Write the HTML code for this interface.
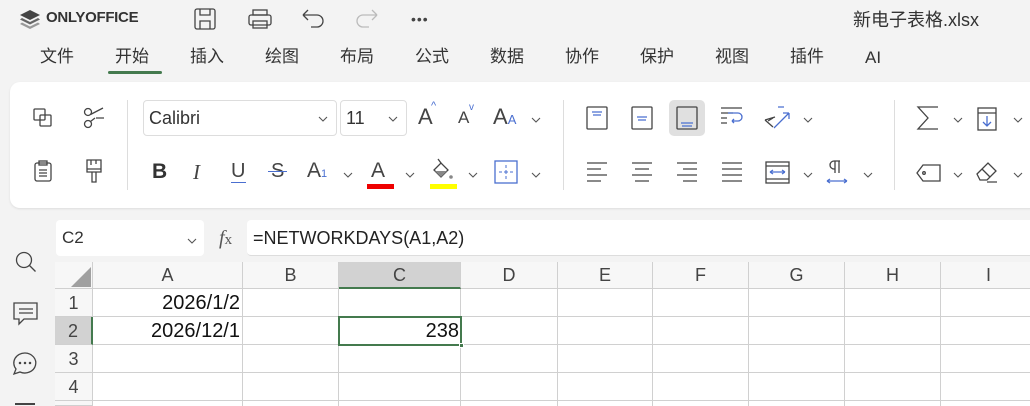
<!DOCTYPE html>
<html><head><meta charset="utf-8"><style>
*{margin:0;padding:0;box-sizing:border-box}
html,body{width:1030px;height:406px;overflow:hidden}
body{background:#f3f3f3;font-family:"Liberation Sans","Noto Sans CJK SC",sans-serif;position:relative;color:#333}
.a{position:absolute}
.tab{position:absolute;top:45px;font-size:17px;line-height:24px;color:#333}
svg{position:absolute;overflow:visible}
.ic{fill:none;stroke:#444;stroke-width:1.3}
.bl{stroke:#4a6fd0}
.cv{fill:none;stroke:#555;stroke-width:1.1}
.hd{position:absolute;top:262px;height:27px;background:#f7f7f7;border-right:1px solid #d0d0d0;border-bottom:1px solid #d0d0d0;text-align:center;font-size:18px;line-height:27px;color:#444}
.rh{position:absolute;left:55px;width:38px;height:28px;background:#f7f7f7;border-bottom:1px solid #d0d0d0;border-right:1px solid #d0d0d0;font-size:18px;line-height:28px;text-align:center;color:#444}
.vl{position:absolute;top:289px;width:1px;height:117px;background:#d0d0d0}
.hl{position:absolute;left:93px;width:937px;height:1px;background:#d0d0d0}
.cell{position:absolute;font-size:20px;line-height:24px;text-align:right;color:#111}
</style></head><body>
<svg style="left:19px;top:9px" width="22" height="20"><path d="M11 1 L21 6 L11 11 L1 6Z" fill="#444"/><path d="M3 9 L11 13 L19 9 L21 10.5 L11 15.5 L1 10.5Z" fill="#666"/><path d="M3 13.5 L11 17.5 L19 13.5 L21 15 L11 20 L1 15Z" fill="#999"/></svg>
<div class="a" style="left:46px;top:9px;font-size:15px;font-weight:bold;color:#333;letter-spacing:-0.3px">ONLYOFFICE</div>
<svg style="left:194px;top:8px" width="22" height="22" class="ic"><rect x="1" y="1" width="20" height="20" rx="2"/><path d="M6 1v6h10V1M6 21v-8h10v8"/></svg>
<svg style="left:248px;top:9px" width="24" height="20" class="ic"><rect x="5" y="1" width="14" height="5"/><rect x="1" y="6" width="22" height="10" rx="2"/><rect x="5" y="12" width="14" height="7"/></svg>
<svg style="left:302px;top:9px" width="22" height="20" class="ic"><path d="M1 6h14a6 6 0 0 1 0 12H9M1 6l5-5M1 6l5 5"/></svg>
<svg style="left:356px;top:9px" width="22" height="20" class="ic"><path d="M21 6H7a6 6 0 0 0 0 12h6M21 6l-5-5M21 6l-5 5" stroke="#bbb"/></svg>
<div class="a" style="left:411px;top:11px;font-size:14px;line-height:16px;color:#444;letter-spacing:1px">•••</div>
<div class="a" style="left:853px;top:9px;font-size:18px;line-height:22px;color:#333">新电子表格.xlsx</div>
<div class="tab" style="left:40px">文件</div>
<div class="tab" style="left:115px">开始</div>
<div class="a" style="left:108px;top:71px;width:54px;height:3px;background:#447a4e;border-radius:2px"></div>
<div class="tab" style="left:190px">插入</div>
<div class="tab" style="left:265px">绘图</div>
<div class="tab" style="left:340px">布局</div>
<div class="tab" style="left:415px">公式</div>
<div class="tab" style="left:490px">数据</div>
<div class="tab" style="left:565px">协作</div>
<div class="tab" style="left:640px">保护</div>
<div class="tab" style="left:715px">视图</div>
<div class="tab" style="left:790px">插件</div>
<div class="tab" style="left:865px;top:46px">AI</div>
<div class="a" style="left:10px;top:82px;width:1040px;height:126px;background:#fff;border-radius:10px;box-shadow:0 1px 2px #ddd"></div>
<div class="a" style="left:127px;top:100px;width:1px;height:90px;background:#ddd"></div>
<div class="a" style="left:563px;top:100px;width:1px;height:90px;background:#ddd"></div>
<div class="a" style="left:894px;top:100px;width:1px;height:90px;background:#ddd"></div>
<svg style="left:33px;top:108px" width="20" height="20" class="ic"><rect x="1" y="1" width="11" height="11" rx="1"/><rect x="7" y="7" width="11" height="11" rx="1"/></svg>
<svg style="left:83px;top:107px" width="22" height="22" class="ic"><circle cx="5" cy="5" r="3.5"/><circle cx="5" cy="17" r="3.5"/><path d="M7.5 7.5L20 1M7.5 14.5L12 11M13 11h8"/></svg>
<svg style="left:34px;top:160px" width="18" height="22" class="ic"><rect x="1" y="3" width="16" height="18" rx="2"/><rect x="5" y="1" width="8" height="4"/><path d="M5 10h8M5 13h8M5 16h8"/></svg>
<svg style="left:86px;top:159px" width="16" height="24" class="ic"><path d="M1 1h14v12H1zM1 10h14M5 1v5M10 1v4M6 13v10h4V13"/></svg>
<div class="a" style="left:143px;top:100px;width:194px;height:36px;border:1px solid #ddd;border-radius:4px;font-size:18px;line-height:34px;padding-left:5px">Calibri</div>
<svg style="left:318px;top:116px" width="10" height="6" class="cv"><path d="M1 1l4 4 4-4"/></svg>
<div class="a" style="left:340px;top:100px;width:67px;height:36px;border:1px solid #ddd;border-radius:4px;font-size:18px;line-height:34px;padding-left:5px">11</div>
<svg style="left:388px;top:116px" width="10" height="6" class="cv"><path d="M1 1l4 4 4-4"/></svg>
<div class="a" style="left:418px;top:104px;font-size:22px;line-height:26px;color:#444">A</div><div class="a" style="left:431px;top:100px;font-size:11px;color:#4a6fd0">^</div>
<div class="a" style="left:458px;top:108px;font-size:17px;line-height:20px;color:#444">A</div><div class="a" style="left:469px;top:102px;font-size:10px;color:#4a6fd0">v</div>
<div class="a" style="left:493px;top:104px;font-size:22px;line-height:26px;color:#444">A<span style="font-size:13px;color:#4a6fd0">A</span></div>
<svg style="left:531px;top:117px" width="10" height="6" class="cv"><path d="M1 1l4 4 4-4"/></svg>
<div class="a" style="left:152px;top:160px;font-size:21px;line-height:24px;font-weight:bold;color:#333">B</div>
<div class="a" style="left:193px;top:160px;font-size:21px;line-height:24px;font-style:italic;color:#444;font-family:'Liberation Serif',serif">I</div>
<div class="a" style="left:231px;top:159px;font-size:20px;line-height:24px;color:#444">U</div><div class="a" style="left:231px;top:182px;width:15px;height:1px;background:#4a6fd0"></div>
<div class="a" style="left:271px;top:159px;font-size:20px;line-height:24px;color:#444">S</div><div class="a" style="left:268px;top:171px;width:19px;height:1px;background:#4a6fd0"></div>
<div class="a" style="left:307px;top:159px;font-size:21px;line-height:24px;color:#444">A<span style="font-size:11px;color:#4a6fd0">1</span></div>
<svg style="left:343px;top:172px" width="10" height="6" class="cv"><path d="M1 1l4 4 4-4"/></svg>
<div class="a" style="left:371px;top:159px;font-size:21px;line-height:24px;color:#444">A</div><div class="a" style="left:367px;top:184px;width:27px;height:5px;background:#e00"></div>
<svg style="left:405px;top:172px" width="10" height="6" class="cv"><path d="M1 1l4 4 4-4"/></svg>
<svg style="left:430px;top:158px" width="26" height="24" class="ic"><path d="M4 12l7-7 7 7-7 7z"/><path d="M5 13h12l-6 6z" fill="#888" stroke="none"/><path d="M11 5L8 1"/><circle cx="21" cy="19" r="1.8" fill="#888" stroke="none"/></svg>
<div class="a" style="left:430px;top:184px;width:27px;height:5px;background:#ff0"></div>
<svg style="left:468px;top:172px" width="10" height="6" class="cv"><path d="M1 1l4 4 4-4"/></svg>
<svg style="left:494px;top:160px" width="24" height="24" class="ic bl"><rect x="1" y="1" width="22" height="22"/><path d="M12 5v3M12 10v4M12 16v3M5 12h3M10 12h4M16 12h3" stroke-width="1"/></svg>
<svg style="left:531px;top:172px" width="10" height="6" class="cv"><path d="M1 1l4 4 4-4"/></svg>
<svg style="left:586px;top:106px" width="22" height="24" class="ic"><rect x="1" y="1" width="20" height="22" rx="1"/><path d="M6 6h10M7 9h8" class="bl"/></svg>
<svg style="left:631px;top:106px" width="22" height="24" class="ic"><rect x="1" y="1" width="20" height="22" rx="1"/><path d="M6 11h10M7 14h8" class="bl"/></svg>
<div class="a" style="left:669px;top:100px;width:36px;height:36px;background:#e0e0e0;border-radius:5px"></div>
<svg style="left:676px;top:106px" width="22" height="24" class="ic"><rect x="1" y="1" width="20" height="22" rx="1"/><path d="M5 17h12M6 20h10" class="bl"/></svg>
<svg style="left:720px;top:107px" width="24" height="22" class="ic"><path d="M1 1h21M1 6h12M1 11h6M1 16h6"/><path d="M8 6h10a4 4 0 0 1 0 8h-6M12 14l2-2M12 14l2 2" class="bl"/></svg>
<svg style="left:764px;top:106px" width="26" height="24" class="ic"><path d="M1 14l8 7M1 14l10-3M4 15l5-3"/><path d="M10 22l15-15M25 7v6M25 7h-6M14 1h6" class="bl"/></svg>
<svg style="left:803px;top:117px" width="10" height="6" class="cv"><path d="M1 1l4 4 4-4"/></svg>
<svg style="left:586px;top:162px" width="22" height="20" class="ic"><path d="M1 1h20M1 7h14M1 13h20M1 19h14"/></svg>
<svg style="left:631px;top:162px" width="22" height="20" class="ic"><path d="M1 1h20M4 7h14M1 13h20M4 19h14"/></svg>
<svg style="left:676px;top:162px" width="22" height="20" class="ic"><path d="M1 1h20M7 7h14M1 13h20M7 19h14"/></svg>
<svg style="left:721px;top:162px" width="22" height="20" class="ic"><path d="M1 1h20M1 7h20M1 13h20M1 19h20"/></svg>
<svg style="left:765px;top:161px" width="25" height="23" class="ic"><rect x="1" y="1" width="23" height="21"/><path d="M1 5h23M1 18h23"/><path d="M5 11h15M5 11l3-2M5 11l3 2M20 11l-3-2M20 11l-3 2" class="bl"/></svg>
<svg style="left:803px;top:172px" width="10" height="6" class="cv"><path d="M1 1l4 4 4-4"/></svg>
<svg style="left:826px;top:160px" width="22" height="24" class="ic"><path d="M9 1v12M13 1v12M14 1H8a4 4 0 0 0 0 8h1"/><path d="M1 21h20M1 21l3-2M1 21l3 2M21 21l-3-2M21 21l-3 2" class="bl"/></svg>
<svg style="left:863px;top:172px" width="10" height="6" class="cv"><path d="M1 1l4 4 4-4"/></svg>
<svg style="left:917px;top:106px" width="22" height="24" class="ic"><path d="M21 1H1l10 11L1 23h20"/></svg>
<svg style="left:953px;top:117px" width="10" height="6" class="cv"><path d="M1 1l4 4 4-4"/></svg>
<svg style="left:977px;top:107px" width="20" height="24" class="ic"><rect x="1" y="1" width="18" height="22"/><path d="M1 6h18"/><path d="M10 9v10M6 15l4 4 4-4" class="bl"/></svg>
<svg style="left:1013px;top:117px" width="10" height="6" class="cv"><path d="M1 1l4 4 4-4"/></svg>
<svg style="left:916px;top:164px" width="25" height="18" class="ic"><path d="M7 1h17v16H7L1 9z"/><circle cx="8" cy="9" r="1.3"/></svg>
<svg style="left:953px;top:172px" width="10" height="6" class="cv"><path d="M1 1l4 4 4-4"/></svg>
<svg style="left:976px;top:161px" width="24" height="22" class="ic"><path d="M1 13L12 2l8 8-9 9H4zM6 8l8 8M11 21h10"/></svg>
<svg style="left:1013px;top:172px" width="10" height="6" class="cv"><path d="M1 1l4 4 4-4"/></svg>
<div class="a" style="left:56px;top:220px;width:148px;height:36px;background:#fff;border-radius:4px;font-size:17px;line-height:36px;padding-left:6px">C2</div>
<svg style="left:187px;top:238px" width="10" height="6" class="cv"><path d="M1 1l4 4 4-4"/></svg>
<div class="a" style="left:219px;top:226px;font-size:20px;line-height:24px;font-style:italic;color:#555;font-family:'Liberation Serif',serif">f<span style="font-size:15px;font-style:normal">x</span></div>
<div class="a" style="left:247px;top:220px;width:800px;height:36px;background:#fff;border-radius:4px;border-bottom:1px solid #ddd;font-size:18px;line-height:36px;padding-left:6px;color:#222">=NETWORKDAYS(A1,A2)</div>
<svg style="left:15px;top:251px" width="22" height="22" class="ic"><circle cx="9" cy="9" r="7.5"/><path d="M14.5 14.5l6 6"/></svg>
<svg style="left:13px;top:302px" width="26" height="24" class="ic"><path d="M1 1h23v16H11l-5 5v-5H1z"/><path d="M6 7h14M6 11h14"/></svg>
<svg style="left:13px;top:352px" width="24" height="24" class="ic"><path d="M12 1a11 10 0 1 1-5 19L1 22l2-5A11 10 0 0 1 12 1z"/><circle cx="7" cy="11" r="0.6"/><circle cx="12" cy="11" r="0.6"/><circle cx="17" cy="11" r="0.6"/></svg>
<div class="a" style="left:15px;top:403px;width:20px;height:2px;background:#444"></div>
<div class="a" style="left:55px;top:262px;width:975px;height:144px;background:#fff"></div>
<div class="hd" style="left:55px;width:38px"></div>
<svg style="left:70px;top:266px" width="22" height="22"><path d="M21 1v20H1z" fill="#a0a0a0"/></svg>
<div class="hd" style="left:93px;width:150px">A</div>
<div class="hd" style="left:243px;width:96px">B</div>
<div class="hd" style="left:339px;width:122px;background:#d2d2d2;border-bottom:2px solid #447a4e">C</div>
<div class="hd" style="left:461px;width:97px">D</div>
<div class="hd" style="left:558px;width:95px">E</div>
<div class="hd" style="left:653px;width:96px">F</div>
<div class="hd" style="left:749px;width:96px">G</div>
<div class="hd" style="left:845px;width:96px">H</div>
<div class="hd" style="left:941px;width:96px">I</div>
<div class="rh" style="top:289px">1</div>
<div class="rh" style="top:317px;background:#d2d2d2;border-right:2px solid #447a4e">2</div>
<div class="rh" style="top:345px">3</div>
<div class="rh" style="top:373px">4</div>
<div class="rh" style="top:401px;height:5px"></div>
<div class="vl" style="left:242px"></div><div class="vl" style="left:338px"></div><div class="vl" style="left:460px"></div><div class="vl" style="left:557px"></div><div class="vl" style="left:652px"></div><div class="vl" style="left:748px"></div><div class="vl" style="left:844px"></div><div class="vl" style="left:940px"></div>
<div class="hl" style="top:316px"></div><div class="hl" style="top:344px"></div><div class="hl" style="top:372px"></div><div class="hl" style="top:400px"></div>
<div class="cell" style="left:93px;width:147px;top:291px">2026/1/2</div>
<div class="cell" style="left:93px;width:147px;top:319px">2026/12/1</div>
<div class="a" style="left:338px;top:316px;width:124px;height:30px;border:2px solid #447a4e"></div>
<div class="a" style="left:459px;top:343px;width:5px;height:5px;background:#447a4e;border:1px solid #fff"></div>
<div class="cell" style="left:339px;width:120px;top:319px">238</div>
</body></html>
